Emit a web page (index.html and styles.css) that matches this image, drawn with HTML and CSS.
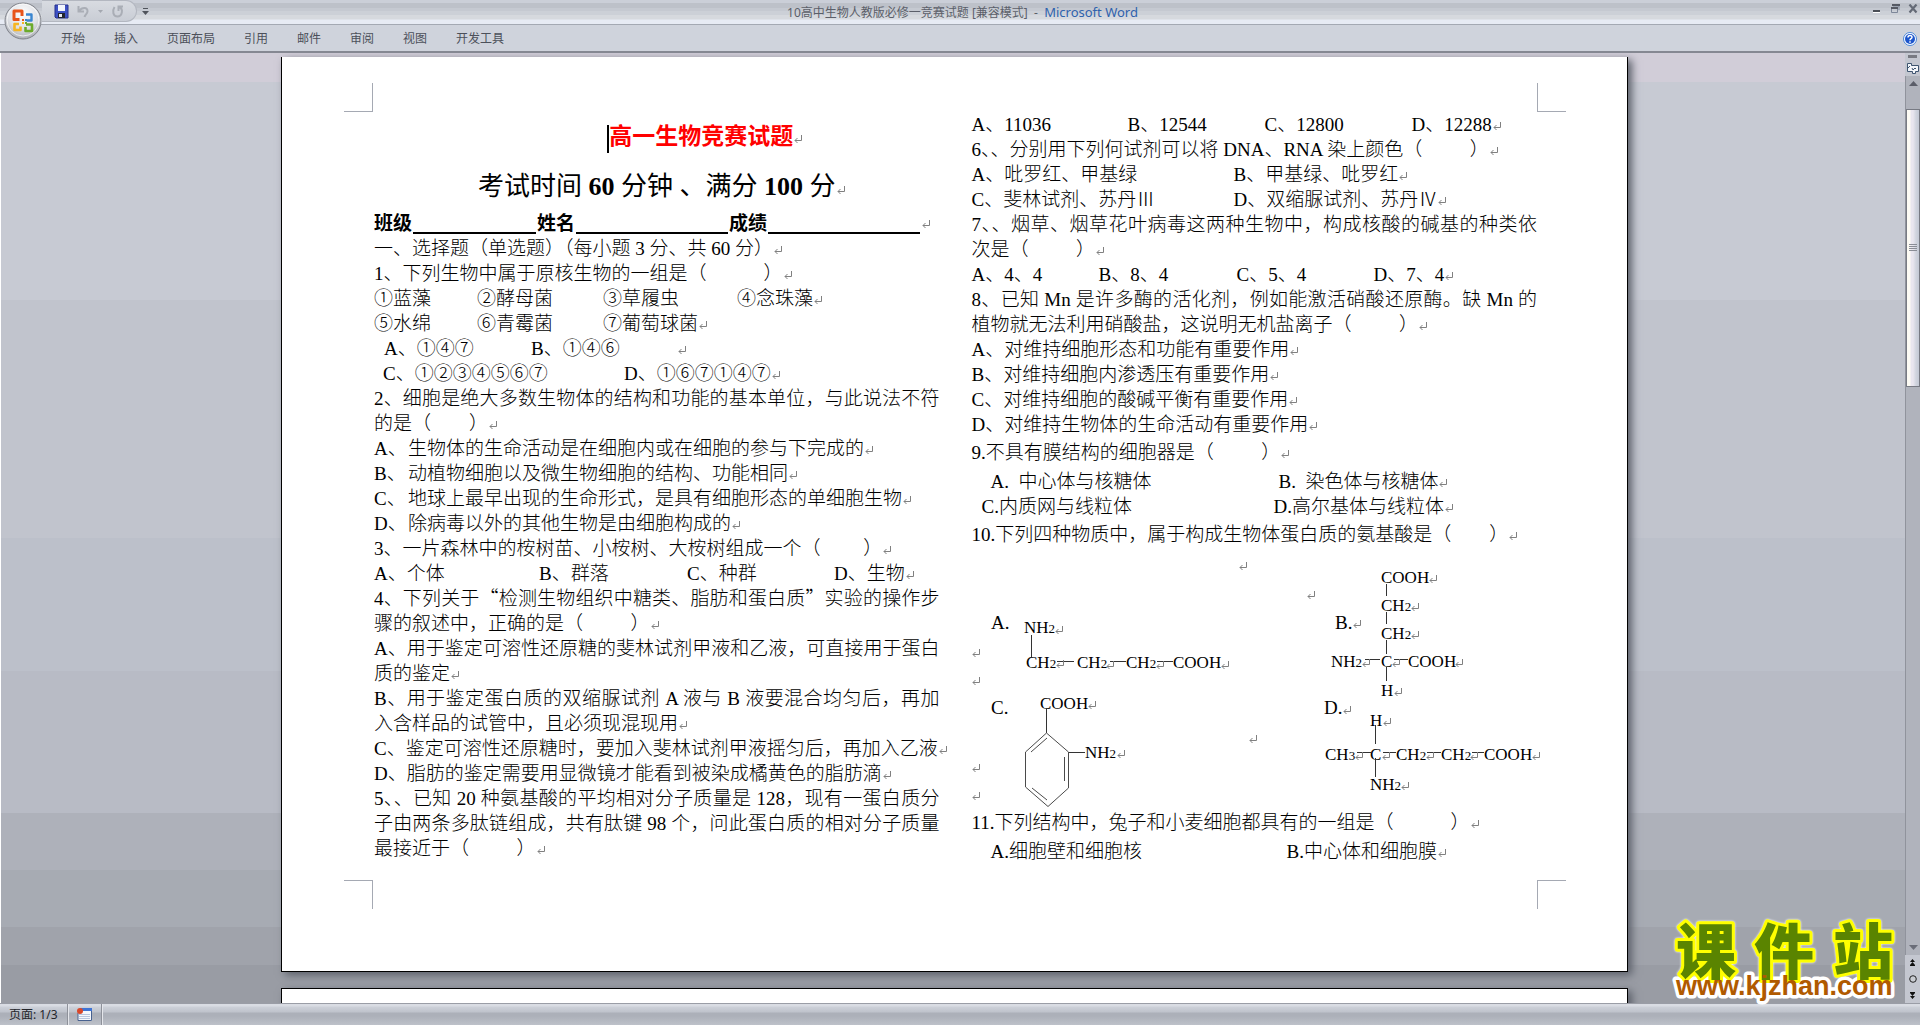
FILE: index.html
```html
<!DOCTYPE html>
<html lang="zh-CN">
<head>
<meta charset="utf-8">
<title>10高中生物人教版必修一竞赛试题 [兼容模式] - Microsoft Word</title>
<link rel="stylesheet" href="styles.css">
</head>
<body>
<header class="titlebar">
  <div class="quick">
    <button class="office" aria-label="Office">
      <svg viewBox="0 0 38 38" width="38" height="38">
        <defs>
          <radialGradient id="orb" cx="50%" cy="30%" r="75%"><stop offset="0" stop-color="#fff"/><stop offset=".55" stop-color="#dfe1e6"/><stop offset="1" stop-color="#a2a5ac"/></radialGradient>
        </defs>
        <circle cx="19" cy="19" r="18" fill="url(#orb)" stroke="#80838b"/>
        <circle cx="19" cy="18" r="16" fill="none" stroke="#fff" stroke-opacity=".7"/>
        <g fill="none" stroke-width="3" stroke-linejoin="round">
          <path d="M15.500 17.500H10V9H18V14" stroke="#e8541a"/>
          <path d="M22 12.500H27.500V18.500H22.500" stroke="#3a86d0" stroke-width="2.400"/>
          <path d="M15 22H10.500V28H16.500V24.500" stroke="#f6b521" stroke-width="2.600"/>
          <path d="M22 22.500H28V29H21.500V25" stroke="#6cab2c" stroke-width="2.600"/>
        </g>
        <path d="M18 17h2v2h-2z" fill="#e8541a"/><path d="M21 17h2v2h-2z" fill="#3a86d0"/><path d="M18 20h2v2h-2z" fill="#f6b521"/><path d="M21 20h2v2h-2z" fill="#6cab2c"/>
      </svg>
    </button>
    <div class="pill">
      <button aria-label="保存"><svg width="15" height="15" viewBox="0 0 15 15"><path d="M1 1h13v13H2l-1-1z" fill="#3c50c4" stroke="#27318c"/><path d="M4 1h7v6H4z" fill="#f2f5fc"/><path d="M4 9h7v5H4z" fill="#23252f"/><path d="M5 10h3v3H5z" fill="#e8ebf5"/></svg></button>
      <button aria-label="撤消" class="undo"><svg width="13" height="13" viewBox="0 0 13 13"><path d="M1.500 1V6.500H7M2 6C5 2 11 2 10.500 6.500C10.200 9 8 9.500 7.500 12" fill="none" stroke="#aaaeb6" stroke-width="2"/></svg></button>
      <svg width="5" height="3" viewBox="0 0 5 3"><path d="M0 0h5L2.500 3z" fill="#a4a8b0"/></svg>
      <button aria-label="重复" class="redo"><svg width="13" height="13" viewBox="0 0 13 13"><path d="M7.500 6V1.500H12M8 2C13 4 11 11.500 6.500 11.500C2 11.500 1 6 3.500 2" fill="none" stroke="#aaaeb6" stroke-width="2"/></svg></button>
    </div>
    <button aria-label="自定义快速访问工具栏"><svg width="7" height="7" viewBox="0 0 7 7"><path d="M1 0h5v1H1zM0 3h7L3.500 7z" fill="#50545c"/></svg></button>
  </div>
  <h1 class="wintitle">10高中生物人教版必修一竞赛试题 [兼容模式]&nbsp; -&nbsp; <span>Microsoft Word</span></h1>
  <div class="winctl">
    <button aria-label="最小化"><svg width="10" height="10" viewBox="0 0 10 10"><path d="M1 6h7v2H1z" fill="#4b4f57"/><path d="M1 8h7v1H1z" fill="#fff"/></svg></button>
    <button aria-label="还原"><svg width="10" height="10" viewBox="0 0 10 10"><path d="M3 2h6v4M1.500 3.500h6v5h-6z" fill="none" stroke="#7d8799"/><path d="M2 0h8v2H2zM1 3h7v2H1z" fill="#555963"/></svg></button>
    <button aria-label="关闭"><svg width="10" height="10" viewBox="0 0 10 10"><path d="M1.500 0.500L8.500 8.500M8.500 0.500L1.500 8.500" stroke="#646a76" stroke-width="2.200"/></svg></button>
  </div>
</header>

<nav class="tabs">
  <a href="#">开始</a><a href="#">插入</a><a href="#">页面布局</a><a href="#">引用</a><a href="#">邮件</a><a href="#">审阅</a><a href="#">视图</a><a href="#">开发工具</a>
  <button class="help" aria-label="帮助"><svg width="14" height="14" viewBox="0 0 14 14"><circle cx="7" cy="7" r="6.500" fill="#fff" stroke="#4a86d8"/><circle cx="7" cy="7" r="5" fill="#1c55cc"/><path d="M5 5.500C5 3 9 3 9 5.200C9 6.800 7 6.600 7 8.300M7 9.300V10.800" fill="none" stroke="#fff" stroke-width="1.500"/></svg></button>
</nav>

<div class="workspace">
  <main class="canvas">
    <article class="page">
      <div class="crops top"><i></i><i></i></div>
      <div class="columns">
        <section class="col">
          <h2 class="red"><span class="caret"></span>高一生物竞赛试题</h2>
          <h2 class="sub">考试时间 <b>60</b> 分钟 、满分 <b>100</b> 分</h2>
          <div class="fields"><span>班级</span><u></u><span>姓名</span><u class="wide"></u><span>成绩</span><u class="wide"></u></div>
          <p>一、选择题（单选题）（每小题 3 分、共 60 分）</p>
          <p>1、下列生物中属于原核生物的一组是（            ）</p>
          <div class="opts o1"><span>①蓝藻</span><span>②酵母菌</span><span>③草履虫</span><span>④念珠藻</span></div>
          <div class="opts o1"><span>⑤水绵</span><span>⑥青霉菌</span><span>⑦葡萄球菌</span></div>
          <div class="opts o2"><span>A、①④⑦</span><span>B、①④⑥</span><span></span></div>
          <div class="opts o3"><span>C、①②③④⑤⑥⑦</span><span>D、①⑥⑦①④⑦</span></div>
          <p>2、细胞是绝大多数生物体的结构和功能的基本单位，与此说法不符的是（        ）</p>
          <p class="item"><span>A、</span>生物体的生命活动是在细胞内或在细胞的参与下完成的</p>
          <p class="item"><span>B、</span>动植物细胞以及微生物细胞的结构、功能相同</p>
          <p class="item"><span>C、</span>地球上最早出现的生命形式，是具有细胞形态的单细胞生物</p>
          <p class="item"><span>D、</span>除病毒以外的其他生物是由细胞构成的</p>
          <p>3、一片森林中的桉树苗、小桉树、大桉树组成一个（         ）</p>
          <div class="opts o4"><span>A、个体</span><span>B、群落</span><span>C、种群</span><span>D、生物</span></div>
          <p>4、下列关于<span class="q">“</span>检测生物组织中糖类、脂肪和蛋白质<span class="q">”</span>实验的操作步骤的叙述中，正确的是（          ）</p>
          <p>A、用于鉴定可溶性还原糖的斐林试剂甲液和乙液，可直接用于蛋白质的鉴定</p>
          <p>B、用于鉴定蛋白质的双缩脲试剂 A 液与 B 液要混合均匀后，再加入含样品的试管中，且必须现混现用</p>
          <p>C、鉴定可溶性还原糖时，要加入斐林试剂甲液摇匀后，再加入乙液</p>
          <p>D、脂肪的鉴定需要用显微镜才能看到被染成橘黄色的脂肪滴</p>
          <p>5、、已知 20 种氨基酸的平均相对分子质量是 128，现有一蛋白质分子由两条多肽链组成，共有肽键 98 个，问此蛋白质的相对分子质量最接近于（          ）</p>
        </section>
        <section class="col">
          <div class="opts o5"><span>A、11036</span><span>B、12544</span><span>C、12800</span><span>D、12288</span></div>
          <p>6、、分别用下列何试剂可以将 DNA、RNA 染上颜色（          ）</p>
          <div class="opts o6"><span>A、吡罗红、甲基绿</span><span>B、甲基绿、吡罗红</span></div>
          <div class="opts o6"><span>C、斐林试剂、苏丹Ⅲ</span><span>D、双缩脲试剂、苏丹Ⅳ</span></div>
          <p>7、、烟草、烟草花叶病毒这两种生物中，构成核酸的碱基的种类依次是（          ）</p>
          <div class="opts o7"><span>A、4、4</span><span>B、8、4</span><span>C、5、4</span><span>D、7、4</span></div>
          <p>8、已知 Mn 是许多酶的活化剂，例如能激活硝酸还原酶。缺 Mn 的植物就无法利用硝酸盐，这说明无机盐离子（          ）</p>
          <p>A、对维持细胞形态和功能有重要作用</p>
          <p>B、对维持细胞内渗透压有重要作用</p>
          <p>C、对维持细胞的酸碱平衡有重要作用</p>
          <p>D、对维持生物体的生命活动有重要作用</p>
          <p class="tall">9.不具有膜结构的细胞器是（          ）</p>
          <div class="opts o8"><span>A.  中心体与核糖体</span><span>B.  染色体与核糖体</span></div>
          <div class="opts o9"><span>C.内质网与线粒体</span><span>D.高尔基体与线粒体</span></div>
          <p class="tall">10.下列四种物质中，属于构成生物体蛋白质的氨基酸是（        ）</p>
          <svg class="chem" viewBox="0 0 570 256" width="570" height="256">
            <defs><path id="mark" d="M7.500 0V5.500H1M3.500 3L1 5.500L3.500 8" fill="none" stroke="#808080"/></defs>
            <g class="lab"><text x="19" y="78">A.</text><text x="363" y="78">B.</text><text x="19" y="163">C.</text><text x="352" y="163">D.</text></g>
            <g>
              <text x="52" y="82">NH<tspan>2</tspan></text>
              <text x="54" y="117">CH<tspan>2</tspan></text><text x="105" y="117">CH<tspan>2</tspan></text><text x="154" y="117">CH<tspan>2</tspan></text><text x="201" y="117">COOH</text>
              <text x="409" y="32">COOH</text><text x="409" y="60">CH<tspan>2</tspan></text><text x="409" y="88">CH<tspan>2</tspan></text>
              <text x="359" y="116">NH<tspan>2</tspan></text><text x="409" y="116">C</text><text x="436" y="116">COOH</text><text x="409" y="145">H</text>
              <text x="68" y="158">COOH</text><text x="113" y="207">NH<tspan>2</tspan></text>
              <text x="398" y="175">H</text><text x="353" y="209">CH<tspan>3</tspan></text><text x="398" y="209">C</text><text x="424" y="209">CH<tspan>2</tspan></text><text x="469" y="209">CH<tspan>2</tspan></text><text x="512" y="209">COOH</text><text x="398" y="239">NH<tspan>2</tspan></text>
            </g>
            <path class="bond" d="M59.500 84V106M85 110.500H102M138 110.500H154M185 110.500H201M414.500 33V45M414.500 61V73M414.500 89V103M414.500 116V130M393 108.500H408M422 108.500H436M74.500 157V182M97 201.500H113M403.500 174V193M403.500 207V226M385 201.500H399M411 201.500H424M455 201.500H469M500 201.500H512"/>
            <path class="bond thin" d="M74.500 182L53.500 201V236L76 255.500L96.500 237V201ZM75 187L59 201M92.500 206V230M60 237L75 249"/>
            <g>
              <use href="#mark" x="83" y="75"/><use href="#mark" x="84" y="109"/><use href="#mark" x="134" y="110"/><use href="#mark" x="184" y="110"/><use href="#mark" x="249" y="110"/>
              <use href="#mark" x="381" y="69"/><use href="#mark" x="457" y="24"/><use href="#mark" x="439" y="52"/><use href="#mark" x="439" y="80"/><use href="#mark" x="390" y="108"/><use href="#mark" x="420" y="108"/><use href="#mark" x="483" y="108"/><use href="#mark" x="422" y="137"/>
              <use href="#mark" x="116" y="150"/><use href="#mark" x="145" y="199"/><use href="#mark" x="371" y="155"/><use href="#mark" x="411" y="167"/><use href="#mark" x="383" y="201"/><use href="#mark" x="410" y="201"/><use href="#mark" x="454" y="201"/><use href="#mark" x="498" y="201"/><use href="#mark" x="560" y="201"/><use href="#mark" x="429" y="231"/>
              <use href="#mark" x="267" y="11"/><use href="#mark" x="335" y="40"/><use href="#mark" x="0" y="98"/><use href="#mark" x="0" y="126"/><use href="#mark" x="277" y="184"/><use href="#mark" x="0" y="213"/><use href="#mark" x="0" y="241"/>
            </g>
          </svg>
          <p class="tall">11.下列结构中，兔子和小麦细胞都具有的一组是（            ）</p>
          <div class="opts o10"><span>A.细胞壁和细胞核</span><span>B.中心体和细胞膜</span></div>
        </section>
      </div>
      <div class="crops bottom"><i></i><i></i></div>
    </article>
    <article class="page next"></article>
  </main>
  <aside class="scroll">
    <div class="split"></div>
    <button class="ruler" aria-label="标尺"><svg width="13" height="13" viewBox="0 0 13 13"><path d="M1.500 1.500H5.500V3.500H12.500V9.500H9.500V11.500H6.500V9.500H1.500Z" fill="#f4f6fa" stroke="#3f5570"/><path d="M2 6L4 4M6 6l1 2l2-2l1 1" fill="none" stroke="#3f5570"/></svg></button>
    <div class="track">
      <svg width="9" height="5" viewBox="0 0 9 5"><path d="M4.500 0L9 5H0z" fill="#5a5d68"/></svg>
      <div class="thumb"><svg width="8" height="8" viewBox="0 0 8 8"><path d="M0 .5h8M0 2.500h8M0 4.500h8M0 6.500h8" stroke="#8a8d96"/></svg></div>
      <svg class="down" width="9" height="5" viewBox="0 0 9 5"><path d="M0 0h9L4.500 5z" fill="#6a6d78"/></svg>
    </div>
    <div class="browse">
      <svg width="7" height="7" viewBox="0 0 7 7"><path d="M3.500 0L6 3H1zM3.500 3L6 6H1zM1 6h5v1H1z" fill="#111"/></svg>
      <svg width="8" height="8" viewBox="0 0 8 8"><circle cx="4" cy="4" r="3.300" fill="#c9ccd2" stroke="#222"/></svg>
      <svg width="7" height="7" viewBox="0 0 7 7"><path d="M1 0h5v1H1zM1 1h5L3.500 4zM1 4h5L3.500 7z" fill="#111"/></svg>
    </div>
  </aside>
  <svg class="watermark" width="232" height="84" viewBox="0 0 232 84">
    <g class="wm-url halo"><text x="6" y="76">www.kjzhan.com</text></g>
    <g class="wm-name"><text class="halo glow" x="6 84 163" y="55">课件站</text></g>
    <g class="wm-url"><text x="6" y="76">www.kjzhan.com</text></g>
  </svg>
</div>

<footer class="status">
  <span class="cell">页面: 1/3</span>
  <span class="cell"><svg width="15" height="13" viewBox="0 0 15 13"><path d="M1 1h14v12H1z" fill="#f5f8fd"/><path d="M3 0h12v3H3z" fill="#3f74d4"/><path d="M14.500 3v9.500H1V5" fill="none" stroke="#47618f"/><path d="M2 6.500h11M2 8.500h11M2 10.500h11" stroke="#b9c6de"/><circle cx="3" cy="3" r="3" fill="#d9482b"/></svg></span>
</footer>
</body>
</html>
```
FILE: styles.css
```css
* { box-sizing: border-box; }

body {
  margin: 0;
  height: 100vh;
  display: flex;
  flex-direction: column;
  overflow: hidden;
  font: 12px/16px "Noto Sans", "Noto Sans CJK SC", sans-serif;
  color: #4c505a;
}

button {
  padding: 0;
  border: 0;
  background: none;
  display: flex;
  align-items: center;
  justify-content: center;
}

svg { display: block; flex: none; }

/* window title bar */
.titlebar {
  flex: none;
  height: 25px;
  display: grid;
  grid-template-columns: 1fr auto 1fr;
  background: linear-gradient(#cbcfd8 0 3px, #bdc1c9 3px 8px, #c5c9d1 8px 11px, #ccd0d7 11px 15px, #d6d9de 15px 19px, #e7ebf4 20px);
  border-bottom: 1px solid #a4a9b3;
}
.quick { display: flex; align-items: flex-start; padding: 0 0 0 4px; }
.quick > button { height: 22px; }
.quick .office { height: 38px; margin-top: 2px; position: relative; z-index: 2; }
.pill {
  display: flex;
  align-items: center;
  gap: 8px;
  width: 95px;
  height: 22px;
  margin-right: 5px;
  padding-left: 12px;
  background: linear-gradient(#d8dbe1, #c9cdd5);
  border: 1px solid #b3b7c0;
  border-left: 0;
  border-radius: 0 11px 11px 0;
}
.wintitle { margin: 0; padding-left: 5px; font-size: 12px; line-height: 25px; font-weight: 400; color: #5b5f69; }
.wintitle span { color: #2f62ad; font-size: 13px; }
.winctl { display: flex; justify-content: flex-end; align-items: flex-start; gap: 8px; padding: 4px 2px 0 0; }

/* ribbon tabs */
.tabs {
  flex: none;
  height: 28px;
  display: flex;
  align-items: center;
  gap: 29px;
  padding: 2px 3px 0 61px;
  background: #cfd3dc;
  border-bottom: 2px solid #858892;
}
.tabs a { color: #4c505a; text-decoration: none; }
.help { margin-left: auto; }

/* document area */
.workspace { flex: 1; min-height: 0; display: flex; position: relative; }
.canvas {
  flex: 1;
  overflow: hidden;
  padding: 4px 0 0 3px;
  background: linear-gradient(#d1cdd8 0 3%, #c7cad3 3% 26%, #c1c4cd 26% 51%, #bcc0ca 51% 65%, #b8bbc5 65% 80%, #aeb1ba 80% 86%, #a7abb3 86% 92%, #a0a3ab 92% 96%, #999ca4 96%);
  border-left: 1px solid #fff;
}
.page {
  max-width: 1347px;
  margin: 0 auto 16px;
  padding: 26px 61px 62px 62px;
  background: #fff;
  border: 1px solid #000;
  border-top: 0;
  box-shadow: 4px 3px 8px #5c606a;
}
.page.next { border-top: 1px solid #000; height: 200px; }

.crops { display: flex; justify-content: space-between; }
.crops i { width: 29px; height: 29px; border: 0 solid #a5a9b3; }
.crops.top i { border-bottom-width: 1px; }
.crops.bottom i { border-top-width: 1px; }
.crops i:first-child { border-right-width: 1px; }
.crops i:last-child { border-left-width: 1px; }

.columns {
  display: grid;
  grid-template-columns: 1fr 1fr;
  gap: 32px;
  padding: 0 29px 16px 30px;
}
.col {
  min-width: 0;
  font: 300 19px/25px "Liberation Serif", "Noto Sans CJK SC", serif;
  color: #000;
}
.col p { margin: 0; white-space: pre-wrap; text-align: justify; }
.col .tall { line-height: 32px; }
.q { font-family: "Noto Sans CJK SC", sans-serif; line-height: 1px; }

/* paragraph marks */
.col p::after,
.col h2::after,
.fields::after,
.opts > :last-child::after {
  content: "";
  display: inline-block;
  width: 8px;
  height: 9px;
  margin: 0 -9px 0 1px;
  background: url("data:image/svg+xml,%3Csvg xmlns='http://www.w3.org/2000/svg' width='8' height='9'%3E%3Cpath d='M7.500 0V5.500H1M3.500 3L1 5.500L3.500 8' fill='none' stroke='%23808080'/%3E%3C/svg%3E") no-repeat;
}

.col h2 { margin: 0; line-height: 50px; text-align: center; }
.col .red { font-size: 23px; font-weight: 700; color: #f00; padding-left: 89px; }
.caret { display: inline-block; width: 2px; height: 28px; margin-left: -2px; background: #000; vertical-align: middle; }
.col .sub { font-size: 26px; font-weight: 400; }

.fields { display: flex; align-items: center; font-weight: 700; line-height: 24px; }
.fields u { width: 123px; height: 20px; margin: 0 1px; border-bottom: 2px solid #000; }
.fields .wide { width: 152px; }

.opts { display: grid; white-space: pre; }
.o1 { grid-template-columns: 103px 126px 134px auto; }
.o2 { grid-template-columns: 147px 146px auto; padding-left: 10px; }
.o3 { grid-template-columns: 241px auto; padding-left: 9px; }
.o4 { grid-template-columns: 165px 148px 147px auto; }
.o5 { grid-template-columns: 156px 137px 147px auto; }
.o6 { grid-template-columns: 262px auto; }
.o7 { grid-template-columns: 127px 138px 137px auto; }
.o8 { grid-template-columns: 288px auto; padding-left: 19px; }
.o9 { grid-template-columns: 292px auto; padding-left: 10px; }
.o10 { grid-template-columns: 296px auto; padding-left: 19px; }
.item span { display: inline-block; width: 34px; }

/* molecule drawings */
.chem { overflow: visible; }
.chem text { font-size: 17px; }
.chem .lab text { font-size: 19px; }
.chem tspan { font-size: 13px; }
.bond { fill: none; stroke: #333; }
.bond.thin { stroke: #4a4a4a; }

/* vertical scroll bar */
.scroll {
  width: 15px;
  display: flex;
  flex-direction: column;
  align-items: stretch;
  background: #c4c7d0;
}
.split { height: 3px; margin: 2px 3px; background: #787a82; }
.ruler { height: 16px; }
.track {
  flex: 1;
  display: flex;
  flex-direction: column;
  align-items: center;
  padding: 5px 0;
  background: #b0b3bc;
  border-left: 1px solid #90939c;
}
.thumb {
  width: 14px;
  height: 32%;
  margin-top: 23px;
  display: flex;
  align-items: center;
  justify-content: center;
  background: linear-gradient(90deg, #fdfbf4 0 3px, #e9e6ef 4px 6px, #d0d4de 9px, #c4c9d5);
  border: 1px solid #777a83;
}
.down { margin-top: auto; }
.browse { height: 48px; display: flex; flex-direction: column; align-items: center; justify-content: space-around; }

/* site watermark */
.watermark { position: absolute; right: 18px; bottom: 0; overflow: visible; }
.wm-name text { font: 900 60px "Noto Sans CJK SC", sans-serif; fill: #5a8400; }
.wm-url text { font: 700 27px "Liberation Sans", Arial, sans-serif; fill: #b05a00; }
.watermark .halo { stroke: #fff; stroke-width: 7px; stroke-linejoin: round; }
.watermark .glow { stroke: #ff0; stroke-width: 6px; paint-order: stroke; filter: drop-shadow(0 0 1px #fff); }

/* status bar */
.status {
  flex: none;
  height: 22px;
  display: flex;
  background: linear-gradient(#d9dce3 0 2px, #ccd0d8 3px, #bfc3cc 8px, #acb0b9 9px 12px, #bfc3cb 22px);
  border-top: 1px solid #9a9da6;
  color: #23252b;
}
.cell { display: flex; align-items: center; padding: 0 9px; border-right: 1px solid #8e919a; box-shadow: 1px 0 #e4e6eb; }
```
